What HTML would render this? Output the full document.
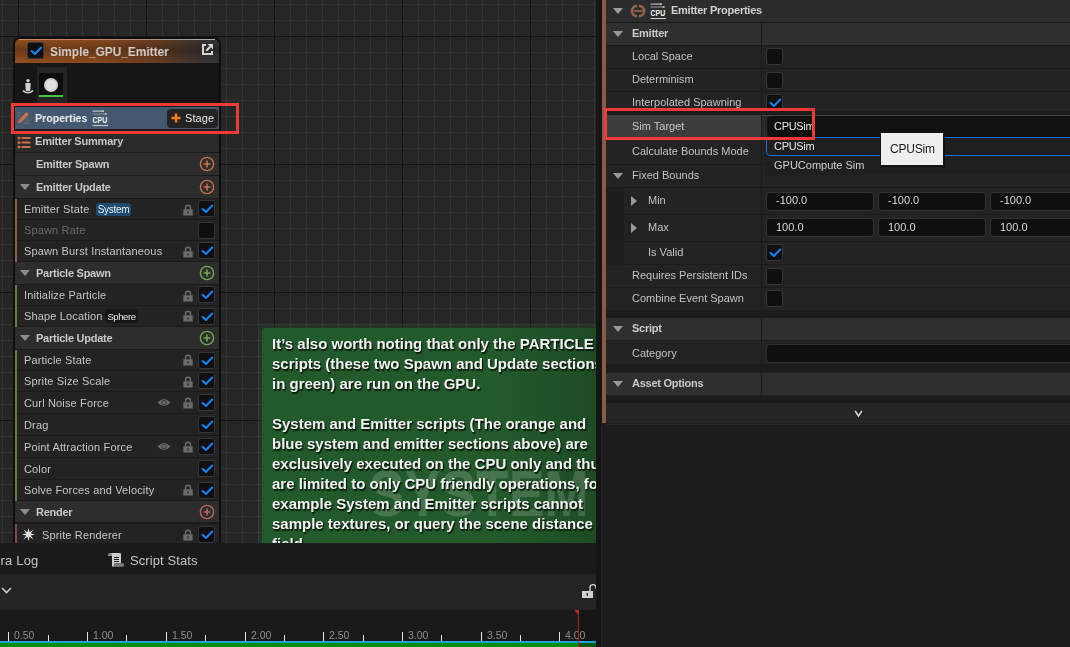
<!DOCTYPE html>
<html><head><meta charset="utf-8">
<style>
*{box-sizing:border-box;margin:0;padding:0}
html,body{width:1070px;height:647px;overflow:hidden;background:#1b1b1b;font-family:"Liberation Sans",sans-serif}
.a{position:absolute}
svg.a{overflow:visible}
#canvas{left:0;top:0;width:596px;height:543px;background-color:#262626;overflow:hidden;
background-image:
linear-gradient(90deg,#141414 1px,transparent 1px),
linear-gradient(180deg,#141414 1px,transparent 1px),
linear-gradient(90deg,#343434 1px,transparent 1px),
linear-gradient(180deg,#343434 1px,transparent 1px);
background-size:128px 128px,128px 128px,16px 16px,16px 16px;
background-position:18px 0,0 36px,2px 0,0 4px}
.t{position:absolute;white-space:nowrap;color:#c0c0c0;font-size:11px;will-change:transform}
</style></head><body>
<div id="canvas" class="a">
<div class="a" style="left:13px;top:37px;width:208px;height:520px;background:#0e0e0e;border-radius:7px 7px 0 0"></div>
<div class="a" style="left:15px;top:39px;width:204px;height:24px;border-radius:5px 5px 0 0;background:linear-gradient(180deg,rgba(0,0,0,0) 0%,rgba(0,0,0,0.28) 45%,rgba(0,0,0,0) 100%),linear-gradient(90deg,#93501f 0%,#8a4a1e 40%,#6a3d22 70%,#3a3634 92%,#353535 100%);"></div>
<div class="a" style="left:19px;top:39px;width:196px;height:1px;background:linear-gradient(90deg,#d08a5a 0%,#c08060 40%,#9a9a9a 80%,#b0b0b0 100%)"></div>
<svg class="a" style="left:27px;top:42px" width="17" height="17" viewBox="0 0 17 17"><rect x="0.5" y="0.5" width="16" height="16" rx="2.5" fill="#0f0f0f" stroke="#363636" stroke-width="1"/><path d="M4.6 9.0 L7.9 11.9 L14.2 5.5" fill="none" stroke="#1b80f0" stroke-width="2.1" stroke-linecap="round" stroke-linejoin="round"/></svg>
<div class="t" style="left:50px;top:45px;font-size:13.5px;line-height:13.5px;color:#d6d0cc;font-weight:bold;transform:scaleX(0.88);transform-origin:0 0">Simple_GPU_Emitter</div>
<svg class="a" style="left:202px;top:44px" width="11" height="11" viewBox="0 0 11 11"><path d="M4 1 H1 V10 H10 V7" fill="none" stroke="#d4d4d4" stroke-width="2"/><path d="M5.6 0 H11 V5.4 Z" fill="#d4d4d4"/><path d="M4.2 6.8 L8.2 2.8" stroke="#d4d4d4" stroke-width="2.2"/></svg>
<div class="a" style="left:15px;top:63px;width:204px;height:480px;background:rgba(25,25,25,0.76);"></div>
<div class="a" style="left:37px;top:67px;width:30px;height:40px;background:#252525;"></div>
<div class="a" style="left:39px;top:73px;width:24px;height:22px;background:#0c0c0c;"></div>
<div class="a" style="left:44px;top:78px;width:14px;height:14px;border-radius:50%;background:radial-gradient(circle at 50% 50%,#e2e2e2 40%,#c8c8c8 70%,#0c0c0c 100%)"></div>
<div class="a" style="left:39px;top:95px;width:24px;height:2px;background:#3fc53f;"></div>
<svg class="a" style="left:22px;top:78px" width="12" height="16" viewBox="0 0 12 16"><circle cx="6" cy="2.6" r="1.7" fill="#cfcfcf"/><path d="M3.2 5.2 Q6 4.4 8.8 5.2 L8.2 13 H3.8 Z" fill="#cfcfcf"/><path d="M0.9 12.6 Q6 16.8 11.1 12.6" fill="none" stroke="#cfcfcf" stroke-width="1.5"/></svg>
<div class="a" style="left:15px;top:106px;width:204px;height:24px;background:#1c1c1c;"></div>
<div class="a" style="left:15px;top:107px;width:204px;height:22px;background:#44596f;"></div>
<svg class="a" style="left:16px;top:110px" width="15" height="15" viewBox="0 0 15 15"><path d="M1.5 13.5 L3 9.5 L10.5 2 L13 4.5 L5.5 12 Z" fill="#c8704a"/><path d="M1 3 H6 M1 6 H4 M9 10 H14 M8 13 H14" stroke="#7a6a6a" stroke-width="1"/></svg>
<div class="t" style="left:35px;top:113px;font-size:11.5px;line-height:11.5px;color:#f0f0f0;font-weight:bold;transform:scaleX(0.92);transform-origin:0 0">Properties</div>
<svg class="a" style="left:92px;top:110px" width="17" height="17" viewBox="0 0 17 17"><path d="M0.5 1.1 H10.5" stroke="#c4c8cc" stroke-width="1.1"/><rect x="10" y="0.2" width="1.8" height="1.8" fill="#c4c8cc"/><path d="M0.5 4.0 H13.5" stroke="#8a9098" stroke-width="1.1"/><rect x="12.8" y="3.1" width="1.8" height="1.8" fill="#b8bcc0"/><text x="0.6" y="12.9" font-family="Liberation Sans" font-weight="bold" font-size="9" textLength="14.6" lengthAdjust="spacingAndGlyphs" fill="#f6f6f6">CPU</text><path d="M0.5 15.5 H16" stroke="#c4c8cc" stroke-width="1.1"/></svg>
<div class="a" style="left:167px;top:109px;width:51px;height:19px;background:#232323;border-radius:4px"></div>
<svg class="a" style="left:171px;top:113px" width="10" height="10" viewBox="0 0 10 10"><path d="M5 0.5 V9.5 M0.5 5 H9.5" stroke="#ff7b12" stroke-width="2.4"/></svg>
<div class="t" style="left:185px;top:113px;font-size:11px;line-height:11px;color:#e8e8e8;letter-spacing:0.1px">Stage</div>
<div class="a" style="left:15px;top:130px;width:204px;height:4px;background:#1c1c1c;"></div>
<div class="a" style="left:15px;top:134px;width:204px;height:18px;background:#2a2a2a;"></div>
<div class="a" style="left:15px;top:152px;width:204px;height:1px;background:#1a1a1a;"></div>
<svg class="a" style="left:17px;top:136px" width="14" height="13" viewBox="0 0 14 13"><g fill="#c8704a"><circle cx="2" cy="2" r="1.5"/><circle cx="2" cy="6.5" r="1.5"/><circle cx="2" cy="11" r="1.5"/><rect x="4.5" y="1" width="9" height="2"/><rect x="4.5" y="5.5" width="9" height="2"/><rect x="4.5" y="10" width="9" height="2"/></g></svg>
<div class="t" style="left:35px;top:136px;font-size:11px;line-height:11px;color:#c8c8c8;font-weight:bold;letter-spacing:-0.2px">Emitter Summary</div>
<div class="a" style="left:15px;top:153px;width:204px;height:22px;background:#2d2d2d;"></div>
<div class="a" style="left:15px;top:175px;width:204px;height:1px;background:#1a1a1a;"></div>
<div class="t" style="left:36px;top:159px;font-size:11px;line-height:11px;color:#c8c8c8;font-weight:bold;letter-spacing:-0.25px">Emitter Spawn</div>
<svg class="a" style="left:199px;top:156px" width="16" height="16" viewBox="0 0 16 16"><circle cx="8" cy="8" r="6.6" fill="none" stroke="#c8704a" stroke-width="1.4"/><path d="M8 4.6 V11.4 M4.6 8 H11.4" stroke="#c8704a" stroke-width="1.6"/></svg>
<div class="a" style="left:15px;top:176px;width:204px;height:22px;background:#2d2d2d;"></div>
<div class="a" style="left:15px;top:198px;width:204px;height:1px;background:#1a1a1a;"></div>
<svg class="a" style="left:20px;top:184px" width="10" height="6" viewBox="0 0 10 6"><path d="M0 0 H10 L5.0 6 Z" fill="#8e8e8e"/></svg>
<div class="t" style="left:36px;top:182px;font-size:11px;line-height:11px;color:#c8c8c8;font-weight:bold;letter-spacing:-0.25px">Emitter Update</div>
<svg class="a" style="left:199px;top:179px" width="16" height="16" viewBox="0 0 16 16"><circle cx="8" cy="8" r="6.6" fill="none" stroke="#c8704a" stroke-width="1.4"/><path d="M8 4.6 V11.4 M4.6 8 H11.4" stroke="#c8704a" stroke-width="1.6"/></svg>
<div class="a" style="left:15px;top:199px;width:204px;height:20px;background:#232323;"></div>
<div class="a" style="left:15px;top:219px;width:204px;height:1px;background:#1b1b1b;"></div>
<div class="a" style="left:15px;top:199px;width:2px;height:21px;background:#8e604a;"></div>
<div class="t" style="left:24px;top:204px;font-size:11px;line-height:11px;color:#c6c6c6;letter-spacing:0.15px">Emitter State</div>
<div class="t" style="left:96px;top:203px;width:35px;height:13px;border-radius:3px;background:#1e4b70;color:#e8eef4;font-size:10px;line-height:13px;text-align:center;letter-spacing:-0.3px">System</div>
<svg class="a" style="left:183px;top:204px" width="10" height="12" viewBox="0 0 10 12"><path d="M2.6 5.5 V3.6 A2.4 2.4 0 0 1 7.4 3.6 V5.5" fill="none" stroke="#6c6c6c" stroke-width="1.5"/><rect x="0.3" y="5.3" width="9.4" height="6.2" fill="#6c6c6c"/><rect x="4.4" y="7.3" width="1.2" height="2.3" fill="#262626"/></svg>
<svg class="a" style="left:198px;top:200px" width="17" height="17" viewBox="0 0 17 17"><rect x="0.5" y="0.5" width="16" height="16" rx="2.5" fill="#0f0f0f" stroke="#363636" stroke-width="1"/><path d="M4.6 9.0 L7.9 11.9 L14.2 5.5" fill="none" stroke="#1b80f0" stroke-width="2.1" stroke-linecap="round" stroke-linejoin="round"/></svg>
<div class="a" style="left:15px;top:220px;width:204px;height:20px;background:#232323;"></div>
<div class="a" style="left:15px;top:240px;width:204px;height:1px;background:#1b1b1b;"></div>
<div class="a" style="left:15px;top:220px;width:2px;height:21px;background:#8e604a;"></div>
<div class="t" style="left:24px;top:225px;font-size:11px;line-height:11px;color:#6a6a6a;letter-spacing:0.15px">Spawn Rate</div>
<svg class="a" style="left:198px;top:222px" width="17" height="17" viewBox="0 0 17 17"><rect x="0.5" y="0.5" width="16" height="16" rx="2.5" fill="#0f0f0f" stroke="#363636" stroke-width="1"/></svg>
<div class="a" style="left:15px;top:241px;width:204px;height:20px;background:#232323;"></div>
<div class="a" style="left:15px;top:261px;width:204px;height:1px;background:#1b1b1b;"></div>
<div class="a" style="left:15px;top:241px;width:2px;height:21px;background:#8e604a;"></div>
<div class="t" style="left:24px;top:246px;font-size:11px;line-height:11px;color:#c6c6c6;letter-spacing:0.15px">Spawn Burst Instantaneous</div>
<svg class="a" style="left:183px;top:246px" width="10" height="12" viewBox="0 0 10 12"><path d="M2.6 5.5 V3.6 A2.4 2.4 0 0 1 7.4 3.6 V5.5" fill="none" stroke="#6c6c6c" stroke-width="1.5"/><rect x="0.3" y="5.3" width="9.4" height="6.2" fill="#6c6c6c"/><rect x="4.4" y="7.3" width="1.2" height="2.3" fill="#262626"/></svg>
<svg class="a" style="left:198px;top:242px" width="17" height="17" viewBox="0 0 17 17"><rect x="0.5" y="0.5" width="16" height="16" rx="2.5" fill="#0f0f0f" stroke="#363636" stroke-width="1"/><path d="M4.6 9.0 L7.9 11.9 L14.2 5.5" fill="none" stroke="#1b80f0" stroke-width="2.1" stroke-linecap="round" stroke-linejoin="round"/></svg>
<div class="a" style="left:15px;top:262px;width:204px;height:22px;background:#2d2d2d;"></div>
<div class="a" style="left:15px;top:284px;width:204px;height:1px;background:#1a1a1a;"></div>
<svg class="a" style="left:20px;top:270px" width="10" height="6" viewBox="0 0 10 6"><path d="M0 0 H10 L5.0 6 Z" fill="#8e8e8e"/></svg>
<div class="t" style="left:36px;top:268px;font-size:11px;line-height:11px;color:#c8c8c8;font-weight:bold;letter-spacing:-0.25px">Particle Spawn</div>
<svg class="a" style="left:199px;top:265px" width="16" height="16" viewBox="0 0 16 16"><circle cx="8" cy="8" r="6.6" fill="none" stroke="#6aa84f" stroke-width="1.4"/><path d="M8 4.6 V11.4 M4.6 8 H11.4" stroke="#6aa84f" stroke-width="1.6"/></svg>
<div class="a" style="left:15px;top:285px;width:204px;height:20px;background:#232323;"></div>
<div class="a" style="left:15px;top:305px;width:204px;height:1px;background:#1b1b1b;"></div>
<div class="a" style="left:15px;top:285px;width:2px;height:21px;background:#607e46;"></div>
<div class="t" style="left:24px;top:290px;font-size:11px;line-height:11px;color:#c6c6c6;letter-spacing:0.15px">Initialize Particle</div>
<svg class="a" style="left:183px;top:290px" width="10" height="12" viewBox="0 0 10 12"><path d="M2.6 5.5 V3.6 A2.4 2.4 0 0 1 7.4 3.6 V5.5" fill="none" stroke="#6c6c6c" stroke-width="1.5"/><rect x="0.3" y="5.3" width="9.4" height="6.2" fill="#6c6c6c"/><rect x="4.4" y="7.3" width="1.2" height="2.3" fill="#262626"/></svg>
<svg class="a" style="left:198px;top:286px" width="17" height="17" viewBox="0 0 17 17"><rect x="0.5" y="0.5" width="16" height="16" rx="2.5" fill="#0f0f0f" stroke="#363636" stroke-width="1"/><path d="M4.6 9.0 L7.9 11.9 L14.2 5.5" fill="none" stroke="#1b80f0" stroke-width="2.1" stroke-linecap="round" stroke-linejoin="round"/></svg>
<div class="a" style="left:15px;top:306px;width:204px;height:20px;background:#232323;"></div>
<div class="a" style="left:15px;top:326px;width:204px;height:1px;background:#1b1b1b;"></div>
<div class="a" style="left:15px;top:306px;width:2px;height:21px;background:#607e46;"></div>
<div class="t" style="left:24px;top:311px;font-size:11px;line-height:11px;color:#c6c6c6;letter-spacing:0.15px">Shape Location</div>
<div class="t" style="left:105px;top:309px;width:33px;height:14px;border-radius:3px;background:#161616;color:#e8e8e8;font-size:9.5px;line-height:15px;text-align:center;letter-spacing:-0.4px">Sphere</div>
<svg class="a" style="left:183px;top:310px" width="10" height="12" viewBox="0 0 10 12"><path d="M2.6 5.5 V3.6 A2.4 2.4 0 0 1 7.4 3.6 V5.5" fill="none" stroke="#6c6c6c" stroke-width="1.5"/><rect x="0.3" y="5.3" width="9.4" height="6.2" fill="#6c6c6c"/><rect x="4.4" y="7.3" width="1.2" height="2.3" fill="#262626"/></svg>
<svg class="a" style="left:198px;top:308px" width="17" height="17" viewBox="0 0 17 17"><rect x="0.5" y="0.5" width="16" height="16" rx="2.5" fill="#0f0f0f" stroke="#363636" stroke-width="1"/><path d="M4.6 9.0 L7.9 11.9 L14.2 5.5" fill="none" stroke="#1b80f0" stroke-width="2.1" stroke-linecap="round" stroke-linejoin="round"/></svg>
<div class="a" style="left:15px;top:327px;width:204px;height:22px;background:#2d2d2d;"></div>
<div class="a" style="left:15px;top:349px;width:204px;height:1px;background:#1a1a1a;"></div>
<svg class="a" style="left:20px;top:335px" width="10" height="6" viewBox="0 0 10 6"><path d="M0 0 H10 L5.0 6 Z" fill="#8e8e8e"/></svg>
<div class="t" style="left:36px;top:333px;font-size:11px;line-height:11px;color:#c8c8c8;font-weight:bold;letter-spacing:-0.25px">Particle Update</div>
<svg class="a" style="left:199px;top:330px" width="16" height="16" viewBox="0 0 16 16"><circle cx="8" cy="8" r="6.6" fill="none" stroke="#6aa84f" stroke-width="1.4"/><path d="M8 4.6 V11.4 M4.6 8 H11.4" stroke="#6aa84f" stroke-width="1.6"/></svg>
<div class="a" style="left:15px;top:350px;width:204px;height:20px;background:#232323;"></div>
<div class="a" style="left:15px;top:370px;width:204px;height:1px;background:#1b1b1b;"></div>
<div class="a" style="left:15px;top:350px;width:2px;height:21px;background:#607e46;"></div>
<div class="t" style="left:24px;top:355px;font-size:11px;line-height:11px;color:#c6c6c6;letter-spacing:0.15px">Particle State</div>
<svg class="a" style="left:183px;top:354px" width="10" height="12" viewBox="0 0 10 12"><path d="M2.6 5.5 V3.6 A2.4 2.4 0 0 1 7.4 3.6 V5.5" fill="none" stroke="#6c6c6c" stroke-width="1.5"/><rect x="0.3" y="5.3" width="9.4" height="6.2" fill="#6c6c6c"/><rect x="4.4" y="7.3" width="1.2" height="2.3" fill="#262626"/></svg>
<svg class="a" style="left:198px;top:352px" width="17" height="17" viewBox="0 0 17 17"><rect x="0.5" y="0.5" width="16" height="16" rx="2.5" fill="#0f0f0f" stroke="#363636" stroke-width="1"/><path d="M4.6 9.0 L7.9 11.9 L14.2 5.5" fill="none" stroke="#1b80f0" stroke-width="2.1" stroke-linecap="round" stroke-linejoin="round"/></svg>
<div class="a" style="left:15px;top:371px;width:204px;height:20px;background:#232323;"></div>
<div class="a" style="left:15px;top:391px;width:204px;height:1px;background:#1b1b1b;"></div>
<div class="a" style="left:15px;top:371px;width:2px;height:21px;background:#607e46;"></div>
<div class="t" style="left:24px;top:376px;font-size:11px;line-height:11px;color:#c6c6c6;letter-spacing:0.15px">Sprite Size Scale</div>
<svg class="a" style="left:183px;top:376px" width="10" height="12" viewBox="0 0 10 12"><path d="M2.6 5.5 V3.6 A2.4 2.4 0 0 1 7.4 3.6 V5.5" fill="none" stroke="#6c6c6c" stroke-width="1.5"/><rect x="0.3" y="5.3" width="9.4" height="6.2" fill="#6c6c6c"/><rect x="4.4" y="7.3" width="1.2" height="2.3" fill="#262626"/></svg>
<svg class="a" style="left:198px;top:372px" width="17" height="17" viewBox="0 0 17 17"><rect x="0.5" y="0.5" width="16" height="16" rx="2.5" fill="#0f0f0f" stroke="#363636" stroke-width="1"/><path d="M4.6 9.0 L7.9 11.9 L14.2 5.5" fill="none" stroke="#1b80f0" stroke-width="2.1" stroke-linecap="round" stroke-linejoin="round"/></svg>
<div class="a" style="left:15px;top:392px;width:204px;height:21px;background:#232323;"></div>
<div class="a" style="left:15px;top:413px;width:204px;height:1px;background:#1b1b1b;"></div>
<div class="a" style="left:15px;top:392px;width:2px;height:22px;background:#607e46;"></div>
<div class="t" style="left:24px;top:398px;font-size:11px;line-height:11px;color:#c6c6c6;letter-spacing:0.15px">Curl Noise Force</div>
<svg class="a" style="left:183px;top:397px" width="10" height="12" viewBox="0 0 10 12"><path d="M2.6 5.5 V3.6 A2.4 2.4 0 0 1 7.4 3.6 V5.5" fill="none" stroke="#6c6c6c" stroke-width="1.5"/><rect x="0.3" y="5.3" width="9.4" height="6.2" fill="#6c6c6c"/><rect x="4.4" y="7.3" width="1.2" height="2.3" fill="#262626"/></svg>
<svg class="a" style="left:157px;top:398px" width="14" height="9" viewBox="0 0 14 9"><path d="M0.5 4.5 Q7 -2.5 13.5 4.5 Q7 11.5 0.5 4.5 Z" fill="#6a6a6a"/><circle cx="7" cy="4.5" r="2.6" fill="#3a3a3a"/><circle cx="7" cy="4.5" r="1.7" fill="#6a6a6a"/></svg>
<svg class="a" style="left:198px;top:394px" width="17" height="17" viewBox="0 0 17 17"><rect x="0.5" y="0.5" width="16" height="16" rx="2.5" fill="#0f0f0f" stroke="#363636" stroke-width="1"/><path d="M4.6 9.0 L7.9 11.9 L14.2 5.5" fill="none" stroke="#1b80f0" stroke-width="2.1" stroke-linecap="round" stroke-linejoin="round"/></svg>
<div class="a" style="left:15px;top:414px;width:204px;height:21px;background:#232323;"></div>
<div class="a" style="left:15px;top:435px;width:204px;height:1px;background:#1b1b1b;"></div>
<div class="a" style="left:15px;top:414px;width:2px;height:22px;background:#607e46;"></div>
<div class="t" style="left:24px;top:420px;font-size:11px;line-height:11px;color:#c6c6c6;letter-spacing:0.15px">Drag</div>
<svg class="a" style="left:198px;top:416px" width="17" height="17" viewBox="0 0 17 17"><rect x="0.5" y="0.5" width="16" height="16" rx="2.5" fill="#0f0f0f" stroke="#363636" stroke-width="1"/><path d="M4.6 9.0 L7.9 11.9 L14.2 5.5" fill="none" stroke="#1b80f0" stroke-width="2.1" stroke-linecap="round" stroke-linejoin="round"/></svg>
<div class="a" style="left:15px;top:436px;width:204px;height:21px;background:#232323;"></div>
<div class="a" style="left:15px;top:457px;width:204px;height:1px;background:#1b1b1b;"></div>
<div class="a" style="left:15px;top:436px;width:2px;height:22px;background:#607e46;"></div>
<div class="t" style="left:24px;top:442px;font-size:11px;line-height:11px;color:#c6c6c6;letter-spacing:0.15px">Point Attraction Force</div>
<svg class="a" style="left:183px;top:441px" width="10" height="12" viewBox="0 0 10 12"><path d="M2.6 5.5 V3.6 A2.4 2.4 0 0 1 7.4 3.6 V5.5" fill="none" stroke="#6c6c6c" stroke-width="1.5"/><rect x="0.3" y="5.3" width="9.4" height="6.2" fill="#6c6c6c"/><rect x="4.4" y="7.3" width="1.2" height="2.3" fill="#262626"/></svg>
<svg class="a" style="left:157px;top:442px" width="14" height="9" viewBox="0 0 14 9"><path d="M0.5 4.5 Q7 -2.5 13.5 4.5 Q7 11.5 0.5 4.5 Z" fill="#6a6a6a"/><circle cx="7" cy="4.5" r="2.6" fill="#3a3a3a"/><circle cx="7" cy="4.5" r="1.7" fill="#6a6a6a"/></svg>
<svg class="a" style="left:198px;top:438px" width="17" height="17" viewBox="0 0 17 17"><rect x="0.5" y="0.5" width="16" height="16" rx="2.5" fill="#0f0f0f" stroke="#363636" stroke-width="1"/><path d="M4.6 9.0 L7.9 11.9 L14.2 5.5" fill="none" stroke="#1b80f0" stroke-width="2.1" stroke-linecap="round" stroke-linejoin="round"/></svg>
<div class="a" style="left:15px;top:458px;width:204px;height:21px;background:#232323;"></div>
<div class="a" style="left:15px;top:479px;width:204px;height:1px;background:#1b1b1b;"></div>
<div class="a" style="left:15px;top:458px;width:2px;height:22px;background:#607e46;"></div>
<div class="t" style="left:24px;top:464px;font-size:11px;line-height:11px;color:#c6c6c6;letter-spacing:0.15px">Color</div>
<svg class="a" style="left:198px;top:460px" width="17" height="17" viewBox="0 0 17 17"><rect x="0.5" y="0.5" width="16" height="16" rx="2.5" fill="#0f0f0f" stroke="#363636" stroke-width="1"/><path d="M4.6 9.0 L7.9 11.9 L14.2 5.5" fill="none" stroke="#1b80f0" stroke-width="2.1" stroke-linecap="round" stroke-linejoin="round"/></svg>
<div class="a" style="left:15px;top:480px;width:204px;height:20px;background:#232323;"></div>
<div class="a" style="left:15px;top:500px;width:204px;height:1px;background:#1b1b1b;"></div>
<div class="a" style="left:15px;top:480px;width:2px;height:21px;background:#607e46;"></div>
<div class="t" style="left:24px;top:485px;font-size:11px;line-height:11px;color:#c6c6c6;letter-spacing:0.15px">Solve Forces and Velocity</div>
<svg class="a" style="left:183px;top:484px" width="10" height="12" viewBox="0 0 10 12"><path d="M2.6 5.5 V3.6 A2.4 2.4 0 0 1 7.4 3.6 V5.5" fill="none" stroke="#6c6c6c" stroke-width="1.5"/><rect x="0.3" y="5.3" width="9.4" height="6.2" fill="#6c6c6c"/><rect x="4.4" y="7.3" width="1.2" height="2.3" fill="#262626"/></svg>
<svg class="a" style="left:198px;top:482px" width="17" height="17" viewBox="0 0 17 17"><rect x="0.5" y="0.5" width="16" height="16" rx="2.5" fill="#0f0f0f" stroke="#363636" stroke-width="1"/><path d="M4.6 9.0 L7.9 11.9 L14.2 5.5" fill="none" stroke="#1b80f0" stroke-width="2.1" stroke-linecap="round" stroke-linejoin="round"/></svg>
<div class="a" style="left:15px;top:501px;width:204px;height:22px;background:#2d2d2d;"></div>
<div class="a" style="left:15px;top:523px;width:204px;height:1px;background:#1a1a1a;"></div>
<svg class="a" style="left:20px;top:509px" width="10" height="6" viewBox="0 0 10 6"><path d="M0 0 H10 L5.0 6 Z" fill="#8e8e8e"/></svg>
<div class="t" style="left:36px;top:507px;font-size:11px;line-height:11px;color:#c8c8c8;font-weight:bold;letter-spacing:-0.25px">Render</div>
<svg class="a" style="left:199px;top:504px" width="16" height="16" viewBox="0 0 16 16"><circle cx="8" cy="8" r="6.6" fill="none" stroke="#c06060" stroke-width="1.4"/><path d="M8 4.6 V11.4 M4.6 8 H11.4" stroke="#c06060" stroke-width="1.6"/></svg>
<div class="a" style="left:15px;top:522px;width:204px;height:2px;background:#1b1b1b;"></div>
<div class="a" style="left:15px;top:524px;width:204px;height:21px;background:#232323;"></div>
<div class="a" style="left:15px;top:545px;width:204px;height:1px;background:#1b1b1b;"></div>
<div class="a" style="left:15px;top:524px;width:2px;height:22px;background:#884848;"></div>
<div class="t" style="left:42px;top:530px;font-size:11px;line-height:11px;color:#c6c6c6;letter-spacing:0.15px">Sprite Renderer</div>
<svg class="a" style="left:183px;top:529px" width="10" height="12" viewBox="0 0 10 12"><path d="M2.6 5.5 V3.6 A2.4 2.4 0 0 1 7.4 3.6 V5.5" fill="none" stroke="#6c6c6c" stroke-width="1.5"/><rect x="0.3" y="5.3" width="9.4" height="6.2" fill="#6c6c6c"/><rect x="4.4" y="7.3" width="1.2" height="2.3" fill="#262626"/></svg>
<svg class="a" style="left:198px;top:526px" width="17" height="17" viewBox="0 0 17 17"><rect x="0.5" y="0.5" width="16" height="16" rx="2.5" fill="#0f0f0f" stroke="#363636" stroke-width="1"/><path d="M4.6 9.0 L7.9 11.9 L14.2 5.5" fill="none" stroke="#1b80f0" stroke-width="2.1" stroke-linecap="round" stroke-linejoin="round"/></svg>
<svg class="a" style="left:22px;top:528px" width="13" height="13" viewBox="0 0 13 13"><path d="M6.5 0 L7.6 4.2 L11.5 1.5 L8.8 5.4 L13 6.5 L8.8 7.6 L11.5 11.5 L7.6 8.8 L6.5 13 L5.4 8.8 L1.5 11.5 L4.2 7.6 L0 6.5 L4.2 5.4 L1.5 1.5 L5.4 4.2 Z" fill="#e0e0e0"/></svg>
<div class="a" style="left:11px;top:103px;width:228px;height:31px;border:3px solid #f03a3a"></div>
<div class="a" style="left:262px;top:328px;width:340px;height:230px;border-radius:3px;background:linear-gradient(90deg,#235a2c 0%,#235a2c 70%,#1d4a24 100%);box-shadow:0 0 0 4px rgba(40,90,50,0.3)"></div>
<div class="t" style="left:369px;top:462px;font-size:64px;line-height:64px;font-weight:bold;color:rgba(215,225,215,0.2);transform:scaleX(0.835);transform-origin:0 0">SYSTEM</div>
<div class="t" style="left:272px;top:336px;font-size:15px;line-height:15px;color:#f2f2f2;font-weight:bold;text-shadow:1px 1px 1px #0b1f0c,1px 2px 1px #0b1f0c">It&#8217;s also worth noting that only the PARTICLE</div>
<div class="t" style="left:272px;top:356px;font-size:15px;line-height:15px;color:#f2f2f2;font-weight:bold;text-shadow:1px 1px 1px #0b1f0c,1px 2px 1px #0b1f0c">scripts (these two Spawn and Update sections</div>
<div class="t" style="left:272px;top:376px;font-size:15px;line-height:15px;color:#f2f2f2;font-weight:bold;text-shadow:1px 1px 1px #0b1f0c,1px 2px 1px #0b1f0c">in green) are run on the GPU.</div>
<div class="t" style="left:272px;top:416px;font-size:15px;line-height:15px;color:#f2f2f2;font-weight:bold;text-shadow:1px 1px 1px #0b1f0c,1px 2px 1px #0b1f0c">System and Emitter scripts (The orange and</div>
<div class="t" style="left:272px;top:436px;font-size:15px;line-height:15px;color:#f2f2f2;font-weight:bold;text-shadow:1px 1px 1px #0b1f0c,1px 2px 1px #0b1f0c">blue system and emitter sections above) are</div>
<div class="t" style="left:272px;top:456px;font-size:15px;line-height:15px;color:#f2f2f2;font-weight:bold;text-shadow:1px 1px 1px #0b1f0c,1px 2px 1px #0b1f0c">exclusively executed on the CPU only and thus</div>
<div class="t" style="left:272px;top:476px;font-size:15px;line-height:15px;color:#f2f2f2;font-weight:bold;text-shadow:1px 1px 1px #0b1f0c,1px 2px 1px #0b1f0c">are limited to only CPU friendly operations, for</div>
<div class="t" style="left:272px;top:496px;font-size:15px;line-height:15px;color:#f2f2f2;font-weight:bold;text-shadow:1px 1px 1px #0b1f0c,1px 2px 1px #0b1f0c">example System and Emitter scripts cannot</div>
<div class="t" style="left:272px;top:516px;font-size:15px;line-height:15px;color:#f2f2f2;font-weight:bold;text-shadow:1px 1px 1px #0b1f0c,1px 2px 1px #0b1f0c">sample textures, or query the scene distance</div>
<div class="t" style="left:272px;top:536px;font-size:15px;line-height:15px;color:#f2f2f2;font-weight:bold;text-shadow:1px 1px 1px #0b1f0c,1px 2px 1px #0b1f0c">field.</div>
</div>
<div class="a" style="left:0px;top:543px;width:596px;height:31px;background:#1a1a1a;"></div>
<div class="t" style="left:-35px;top:554px;font-size:13px;line-height:13px;color:#c4c4c4;letter-spacing:0.2px">Camera Log</div>
<svg class="a" style="left:108px;top:552px" width="16" height="16" viewBox="0 0 16 16"><path d="M4.5 1 H2 Q0 1 0 2.6 V4 H4.5 Z" fill="#8c8c8c"/><path d="M3.2 1 H11.8 Q13 1 13 2.2 V11.2 H6.4 V13.6 Q6.4 14.8 5.2 14.8 Q4 14.8 4 13.6 V2 Q4 1 3.2 1 Z" fill="#cdcdcd"/><path d="M6.4 11.2 H16 V13.2 Q16 14.8 14.4 14.8 H5.2 Q6.4 14.6 6.4 13.2 Z" fill="#7c7c7c"/><path d="M6 5.5 H11 M6 7.5 H11 M6 9.5 H11" stroke="#151515" stroke-width="1"/></svg>
<div class="t" style="left:130px;top:554px;font-size:13px;line-height:13px;color:#c4c4c4;letter-spacing:0.1px">Script Stats</div>
<div class="a" style="left:0px;top:574px;width:596px;height:36px;background:#242424;"></div>
<svg class="a" style="left:1px;top:587px" width="11" height="7" viewBox="0 0 11 7"><path d="M1 1 L5.5 5.5 L10 1" fill="none" stroke="#c8c8c8" stroke-width="1.6"/></svg>
<svg class="a" style="left:581px;top:583px" width="16" height="16" viewBox="0 0 16 16"><path d="M9 8.5 V4.6 A3 3 0 0 1 15 4.6 V5.8" fill="none" stroke="#d0d0d0" stroke-width="1.4"/><rect x="1" y="8" width="11" height="7" fill="#d0d0d0"/><rect x="5.6" y="10" width="1.3" height="3" rx="0.6" fill="#1a1a1a"/></svg>
<div class="a" style="left:0px;top:610px;width:596px;height:31px;background:#1a1a1a;"></div>
<div class="a" style="left:579px;top:610px;width:17px;height:31px;background:#151515;"></div>
<div class="a" style="left:8px;top:632px;width:1px;height:9px;background:#e6e6e6;"></div>
<div class="a" style="left:48px;top:635px;width:1px;height:6px;background:#e6e6e6;"></div>
<div class="t" style="left:14px;top:630px;font-size:10.5px;line-height:10.5px;color:#8e8e8e;">0.50</div>
<div class="a" style="left:87px;top:632px;width:1px;height:9px;background:#e6e6e6;"></div>
<div class="a" style="left:126px;top:635px;width:1px;height:6px;background:#e6e6e6;"></div>
<div class="t" style="left:93px;top:630px;font-size:10.5px;line-height:10.5px;color:#8e8e8e;">1.00</div>
<div class="a" style="left:166px;top:632px;width:1px;height:9px;background:#e6e6e6;"></div>
<div class="a" style="left:205px;top:635px;width:1px;height:6px;background:#e6e6e6;"></div>
<div class="t" style="left:172px;top:630px;font-size:10.5px;line-height:10.5px;color:#8e8e8e;">1.50</div>
<div class="a" style="left:245px;top:632px;width:1px;height:9px;background:#e6e6e6;"></div>
<div class="a" style="left:284px;top:635px;width:1px;height:6px;background:#e6e6e6;"></div>
<div class="t" style="left:251px;top:630px;font-size:10.5px;line-height:10.5px;color:#8e8e8e;">2.00</div>
<div class="a" style="left:323px;top:632px;width:1px;height:9px;background:#e6e6e6;"></div>
<div class="a" style="left:363px;top:635px;width:1px;height:6px;background:#e6e6e6;"></div>
<div class="t" style="left:329px;top:630px;font-size:10.5px;line-height:10.5px;color:#8e8e8e;">2.50</div>
<div class="a" style="left:402px;top:632px;width:1px;height:9px;background:#e6e6e6;"></div>
<div class="a" style="left:441px;top:635px;width:1px;height:6px;background:#e6e6e6;"></div>
<div class="t" style="left:408px;top:630px;font-size:10.5px;line-height:10.5px;color:#8e8e8e;">3.00</div>
<div class="a" style="left:481px;top:632px;width:1px;height:9px;background:#e6e6e6;"></div>
<div class="a" style="left:520px;top:635px;width:1px;height:6px;background:#e6e6e6;"></div>
<div class="t" style="left:487px;top:630px;font-size:10.5px;line-height:10.5px;color:#8e8e8e;">3.50</div>
<div class="a" style="left:559px;top:632px;width:1px;height:9px;background:#e6e6e6;"></div>
<div class="a" style="left:599px;top:635px;width:1px;height:6px;background:#e6e6e6;"></div>
<div class="t" style="left:565px;top:630px;font-size:10.5px;line-height:10.5px;color:#8e8e8e;">4.00</div>
<div class="a" style="left:0px;top:641px;width:596px;height:2px;background:#1aa3d6;"></div>
<div class="a" style="left:0px;top:643px;width:596px;height:4px;background:#078c07;"></div>
<div class="a" style="left:578px;top:643px;width:18px;height:4px;background:#0a5a0a;"></div>
<div class="a" style="left:578px;top:612px;width:1px;height:35px;background:#a82222;"></div>
<svg class="a" style="left:574px;top:610px" width="5" height="6" viewBox="0 0 5 6"><path d="M0 0 H5 V6 Z" fill="#b02a2a"/></svg>
<div class="a" style="left:596px;top:0px;width:6px;height:647px;background:#151515;"></div>
<div class="a" style="left:601px;top:423px;width:1px;height:224px;background:#222222;"></div>
<div class="a" style="left:602px;top:0px;width:468px;height:647px;background:#1b1b1b;"></div>
<div class="a" style="left:602px;top:0px;width:4px;height:423px;background:#8a5c48;"></div>
<div class="a" style="left:606px;top:0px;width:464px;height:22px;background:#2c2c2c;"></div>
<div class="a" style="left:606px;top:22px;width:464px;height:1px;background:#1a1a1a;"></div>
<svg class="a" style="left:613px;top:8px" width="10" height="6" viewBox="0 0 10 6"><path d="M0 0 H10 L5.0 6 Z" fill="#9a9a9a"/></svg>
<svg class="a" style="left:632px;top:5px" width="12" height="12" viewBox="0 0 12 12"><path d="M5 0.9 A5 5 0 0 0 5 11.1 M7 0.9 A5 5 0 0 1 7 11.1" fill="none" stroke="#93604a" stroke-width="2.6"/><path d="M1.5 6 H10.5" stroke="#93604a" stroke-width="1.8"/></svg>
<svg class="a" style="left:650px;top:3px" width="17" height="17" viewBox="0 0 17 17"><path d="M0.5 1.1 H10.5" stroke="#c4c8cc" stroke-width="1.1"/><rect x="10" y="0.2" width="1.8" height="1.8" fill="#c4c8cc"/><path d="M0.5 4.0 H13.5" stroke="#8a9098" stroke-width="1.1"/><rect x="12.8" y="3.1" width="1.8" height="1.8" fill="#b8bcc0"/><text x="0.6" y="12.9" font-family="Liberation Sans" font-weight="bold" font-size="9" textLength="14.6" lengthAdjust="spacingAndGlyphs" fill="#f6f6f6">CPU</text><path d="M0.5 15.5 H16" stroke="#c4c8cc" stroke-width="1.1"/></svg>
<div class="t" style="left:671px;top:5px;font-size:11px;line-height:11px;color:#cfcfcf;font-weight:bold;letter-spacing:-0.25px">Emitter Properties</div>
<div class="a" style="left:606px;top:23px;width:464px;height:22px;background:#2f2f2f;"></div>
<div class="a" style="left:606px;top:45px;width:464px;height:1px;background:#1a1a1a;"></div>
<div class="a" style="left:761px;top:23px;width:1px;height:22px;background:#1a1a1a;"></div>
<svg class="a" style="left:613px;top:31px" width="10" height="6" viewBox="0 0 10 6"><path d="M0 0 H10 L5.0 6 Z" fill="#9a9a9a"/></svg>
<div class="t" style="left:632px;top:28px;font-size:11px;line-height:11px;color:#cacaca;font-weight:bold;letter-spacing:-0.25px">Emitter</div>
<div class="a" style="left:606px;top:46px;width:464px;height:22px;background:#232323;"></div>
<div class="a" style="left:606px;top:68px;width:464px;height:1px;background:#1b1b1b;"></div>
<div class="a" style="left:761px;top:46px;width:1px;height:22px;background:#1b1b1b;"></div>
<div class="t" style="left:632px;top:51px;font-size:11px;line-height:11px;color:#c2c2c2;">Local Space</div>
<svg class="a" style="left:766px;top:48px" width="17" height="17" viewBox="0 0 17 17"><rect x="0.5" y="0.5" width="16" height="16" rx="2.5" fill="#0f0f0f" stroke="#363636" stroke-width="1"/></svg>
<div class="a" style="left:606px;top:69px;width:464px;height:22px;background:#232323;"></div>
<div class="a" style="left:606px;top:91px;width:464px;height:1px;background:#1b1b1b;"></div>
<div class="a" style="left:761px;top:69px;width:1px;height:22px;background:#1b1b1b;"></div>
<div class="t" style="left:632px;top:74px;font-size:11px;line-height:11px;color:#c2c2c2;">Determinism</div>
<svg class="a" style="left:766px;top:72px" width="17" height="17" viewBox="0 0 17 17"><rect x="0.5" y="0.5" width="16" height="16" rx="2.5" fill="#0f0f0f" stroke="#363636" stroke-width="1"/></svg>
<div class="a" style="left:606px;top:92px;width:464px;height:22px;background:#232323;"></div>
<div class="a" style="left:606px;top:114px;width:464px;height:1px;background:#1b1b1b;"></div>
<div class="a" style="left:761px;top:92px;width:1px;height:22px;background:#1b1b1b;"></div>
<div class="t" style="left:632px;top:97px;font-size:11px;line-height:11px;color:#c2c2c2;">Interpolated Spawning</div>
<svg class="a" style="left:766px;top:94px" width="17" height="17" viewBox="0 0 17 17"><rect x="0.5" y="0.5" width="16" height="16" rx="2.5" fill="#0f0f0f" stroke="#363636" stroke-width="1"/><path d="M4.6 9.0 L7.9 11.9 L14.2 5.5" fill="none" stroke="#1b80f0" stroke-width="2.1" stroke-linecap="round" stroke-linejoin="round"/></svg>
<div class="a" style="left:606px;top:111px;width:464px;height:4px;background:#1c1c1c;"></div>
<div class="a" style="left:606px;top:115px;width:155px;height:22px;background:#3d3d3d;"></div>
<div class="a" style="left:761px;top:115px;width:1px;height:22px;background:#1b1b1b;"></div>
<div class="a" style="left:762px;top:115px;width:308px;height:22px;background:#2a2a2a;"></div>
<div class="a" style="left:762px;top:115px;width:308px;height:1px;background:#444;"></div>
<div class="t" style="left:632px;top:121px;font-size:11px;line-height:11px;color:#c6c6c6;">Sim Target</div>
<div class="a" style="left:606px;top:138px;width:464px;height:26px;background:#232323;"></div>
<div class="a" style="left:606px;top:164px;width:464px;height:1px;background:#1b1b1b;"></div>
<div class="a" style="left:761px;top:138px;width:1px;height:26px;background:#1b1b1b;"></div>
<div class="t" style="left:632px;top:146px;font-size:11px;line-height:11px;color:#c2c2c2;">Calculate Bounds Mode</div>
<div class="a" style="left:606px;top:165px;width:464px;height:22px;background:#232323;"></div>
<div class="a" style="left:606px;top:187px;width:464px;height:1px;background:#1b1b1b;"></div>
<div class="a" style="left:761px;top:165px;width:1px;height:22px;background:#1b1b1b;"></div>
<div class="t" style="left:632px;top:170px;font-size:11px;line-height:11px;color:#c2c2c2;">Fixed Bounds</div>
<svg class="a" style="left:613px;top:173px" width="10" height="6" viewBox="0 0 10 6"><path d="M0 0 H10 L5.0 6 Z" fill="#9a9a9a"/></svg>
<div class="a" style="left:606px;top:188px;width:464px;height:26px;background:#232323;"></div>
<div class="a" style="left:606px;top:214px;width:464px;height:1px;background:#1b1b1b;"></div>
<div class="a" style="left:606px;top:188px;width:18px;height:27px;background:#1d1d1d;"></div>
<div class="a" style="left:761px;top:188px;width:1px;height:26px;background:#1b1b1b;"></div>
<svg class="a" style="left:631px;top:196px" width="6" height="10" viewBox="0 0 6 10"><path d="M0 0 V10 L6 5.0 Z" fill="#9a9a9a"/></svg>
<div class="t" style="left:648px;top:195px;font-size:11px;line-height:11px;color:#c2c2c2;">Min</div>
<div class="a" style="left:766px;top:192px;width:108px;height:19px;background:#0f0f0f;border:1px solid #333333;border-radius:4px"></div>
<div class="t" style="left:776px;top:195px;font-size:11px;line-height:11px;color:#d8d8d8;">-100.0</div>
<div class="a" style="left:878px;top:192px;width:108px;height:19px;background:#0f0f0f;border:1px solid #333333;border-radius:4px"></div>
<div class="t" style="left:888px;top:195px;font-size:11px;line-height:11px;color:#d8d8d8;">-100.0</div>
<div class="a" style="left:990px;top:192px;width:108px;height:19px;background:#0f0f0f;border:1px solid #333333;border-radius:4px"></div>
<div class="t" style="left:1000px;top:195px;font-size:11px;line-height:11px;color:#d8d8d8;">-100.0</div>
<div class="a" style="left:606px;top:215px;width:464px;height:26px;background:#232323;"></div>
<div class="a" style="left:606px;top:241px;width:464px;height:1px;background:#1b1b1b;"></div>
<div class="a" style="left:606px;top:215px;width:18px;height:27px;background:#1d1d1d;"></div>
<div class="a" style="left:761px;top:215px;width:1px;height:26px;background:#1b1b1b;"></div>
<svg class="a" style="left:631px;top:223px" width="6" height="10" viewBox="0 0 6 10"><path d="M0 0 V10 L6 5.0 Z" fill="#9a9a9a"/></svg>
<div class="t" style="left:648px;top:222px;font-size:11px;line-height:11px;color:#c2c2c2;">Max</div>
<div class="a" style="left:766px;top:218px;width:108px;height:19px;background:#0f0f0f;border:1px solid #333333;border-radius:4px"></div>
<div class="t" style="left:776px;top:222px;font-size:11px;line-height:11px;color:#d8d8d8;">100.0</div>
<div class="a" style="left:878px;top:218px;width:108px;height:19px;background:#0f0f0f;border:1px solid #333333;border-radius:4px"></div>
<div class="t" style="left:888px;top:222px;font-size:11px;line-height:11px;color:#d8d8d8;">100.0</div>
<div class="a" style="left:990px;top:218px;width:108px;height:19px;background:#0f0f0f;border:1px solid #333333;border-radius:4px"></div>
<div class="t" style="left:1000px;top:222px;font-size:11px;line-height:11px;color:#d8d8d8;">100.0</div>
<div class="a" style="left:606px;top:242px;width:464px;height:22px;background:#232323;"></div>
<div class="a" style="left:606px;top:264px;width:464px;height:1px;background:#1b1b1b;"></div>
<div class="a" style="left:606px;top:242px;width:18px;height:23px;background:#1e1e1e;"></div>
<div class="a" style="left:761px;top:242px;width:1px;height:22px;background:#1b1b1b;"></div>
<div class="t" style="left:648px;top:247px;font-size:11px;line-height:11px;color:#c2c2c2;">Is Valid</div>
<svg class="a" style="left:766px;top:244px" width="17" height="17" viewBox="0 0 17 17"><rect x="0.5" y="0.5" width="16" height="16" rx="2.5" fill="#0f0f0f" stroke="#363636" stroke-width="1"/><path d="M4.6 9.0 L7.9 11.9 L14.2 5.5" fill="none" stroke="#1b80f0" stroke-width="2.1" stroke-linecap="round" stroke-linejoin="round"/></svg>
<div class="a" style="left:606px;top:265px;width:464px;height:22px;background:#232323;"></div>
<div class="a" style="left:606px;top:287px;width:464px;height:1px;background:#1b1b1b;"></div>
<div class="a" style="left:761px;top:265px;width:1px;height:22px;background:#1b1b1b;"></div>
<div class="t" style="left:632px;top:270px;font-size:11px;line-height:11px;color:#c2c2c2;">Requires Persistent IDs</div>
<svg class="a" style="left:766px;top:268px" width="17" height="17" viewBox="0 0 17 17"><rect x="0.5" y="0.5" width="16" height="16" rx="2.5" fill="#0f0f0f" stroke="#363636" stroke-width="1"/></svg>
<div class="a" style="left:606px;top:288px;width:464px;height:22px;background:#232323;"></div>
<div class="a" style="left:606px;top:310px;width:464px;height:1px;background:#1b1b1b;"></div>
<div class="a" style="left:761px;top:288px;width:1px;height:22px;background:#1b1b1b;"></div>
<div class="t" style="left:632px;top:293px;font-size:11px;line-height:11px;color:#c2c2c2;">Combine Event Spawn</div>
<svg class="a" style="left:766px;top:290px" width="17" height="17" viewBox="0 0 17 17"><rect x="0.5" y="0.5" width="16" height="16" rx="2.5" fill="#0f0f0f" stroke="#363636" stroke-width="1"/></svg>
<div class="a" style="left:606px;top:310px;width:464px;height:8px;background:#1c1c1c;"></div>
<div class="a" style="left:606px;top:318px;width:464px;height:22px;background:#2f2f2f;"></div>
<div class="a" style="left:606px;top:340px;width:464px;height:1px;background:#1a1a1a;"></div>
<div class="a" style="left:761px;top:318px;width:1px;height:22px;background:#1a1a1a;"></div>
<svg class="a" style="left:613px;top:326px" width="10" height="6" viewBox="0 0 10 6"><path d="M0 0 H10 L5.0 6 Z" fill="#9a9a9a"/></svg>
<div class="t" style="left:632px;top:323px;font-size:11px;line-height:11px;color:#cacaca;font-weight:bold;letter-spacing:-0.25px">Script</div>
<div class="a" style="left:606px;top:341px;width:464px;height:23px;background:#232323;"></div>
<div class="a" style="left:606px;top:364px;width:464px;height:1px;background:#1b1b1b;"></div>
<div class="a" style="left:761px;top:341px;width:1px;height:23px;background:#1b1b1b;"></div>
<div class="t" style="left:632px;top:348px;font-size:11px;line-height:11px;color:#c2c2c2;">Category</div>
<div class="a" style="left:766px;top:344px;width:310px;height:19px;background:#0f0f0f;border:1px solid #2e2e2e;border-radius:4px"></div>
<div class="a" style="left:606px;top:365px;width:464px;height:8px;background:#1c1c1c;"></div>
<div class="a" style="left:606px;top:373px;width:464px;height:22px;background:#2f2f2f;"></div>
<div class="a" style="left:606px;top:395px;width:464px;height:1px;background:#1a1a1a;"></div>
<div class="a" style="left:761px;top:373px;width:1px;height:22px;background:#1a1a1a;"></div>
<svg class="a" style="left:613px;top:381px" width="10" height="6" viewBox="0 0 10 6"><path d="M0 0 H10 L5.0 6 Z" fill="#9a9a9a"/></svg>
<div class="t" style="left:632px;top:378px;font-size:11px;line-height:11px;color:#cacaca;font-weight:bold;letter-spacing:-0.25px">Asset Options</div>
<div class="a" style="left:606px;top:395px;width:464px;height:8px;background:#1c1c1c;"></div>
<div class="a" style="left:606px;top:403px;width:464px;height:20px;background:#252525;"></div>
<div class="a" style="left:606px;top:423px;width:464px;height:1px;background:#1e1e1e;"></div>
<div class="a" style="left:606px;top:424px;width:464px;height:1px;background:#262626;"></div>
<svg class="a" style="left:854px;top:410px" width="9" height="7" viewBox="0 0 9 7"><path d="M1.2 1 L4.5 6 L7.8 1" fill="none" stroke="#d4d4d4" stroke-width="1.6"/></svg>
<div class="a" style="left:767px;top:116px;width:310px;height:21px;background:#101010;border-radius:4px"></div>
<div class="t" style="left:774px;top:121px;font-size:11px;line-height:11px;color:#e6e6e6;letter-spacing:-0.3px">CPUSim</div>
<div class="a" style="left:766px;top:137px;width:304px;height:38px;background:#1f1f1f;"></div>
<div class="a" style="left:766px;top:137px;width:310px;height:19px;background:transparent;border:1px solid #1b6fd6;border-radius:0 0 4px 4px"></div>
<div class="t" style="left:774px;top:141px;font-size:11px;line-height:11px;color:#e6e6e6;letter-spacing:-0.3px">CPUSim</div>
<div class="t" style="left:774px;top:160px;font-size:11px;line-height:11px;color:#d0d0d0;">GPUCompute Sim</div>
<div class="a" style="left:880px;top:132px;width:64px;height:34px;background:#efefef;border:1px solid #161616;box-shadow:1px 1px 0 #101010"></div>
<div class="t" style="left:890px;top:143px;font-size:12px;line-height:12px;color:#1a1a1a;letter-spacing:-0.2px">CPUSim</div>
<div class="a" style="left:604px;top:108px;width:211px;height:32px;border:3px solid #f03a3a"></div>
</body></html>
